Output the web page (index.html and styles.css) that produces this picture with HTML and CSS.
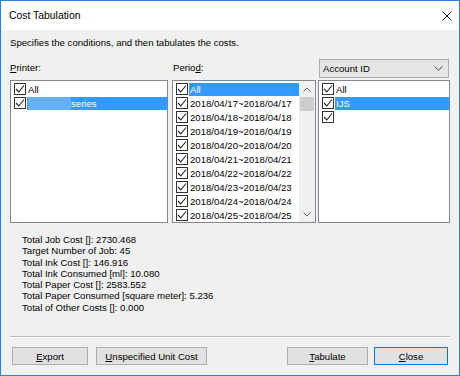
FILE: index.html
```html
<!DOCTYPE html>
<html lang="en">
<head>
    <meta charset="UTF-8">
    <title>Cost Tabulation</title>
    <link rel="stylesheet" href="styles.css">
</head>
<body>
    <svg class="defs" width="0" height="0">
        <symbol id="chk" viewBox="0 0 12 12">
            <rect x="0.5" y="0.5" width="11" height="11" fill="#fff" stroke="#333"/>
            <polyline points="2,6 4.8,9 10,2.5" fill="none" stroke="#222" stroke-width="1.1"/>
        </symbol>
    </svg>

    <div class="window">
        <div class="titlebar">
            <span class="title">Cost Tabulation</span>
            <svg class="close-x" viewBox="0 0 10 10">
                <path d="M0.5,0.5 L9.5,9.5 M9.5,0.5 L0.5,9.5" stroke="#111" stroke-width="1"/>
            </svg>
        </div>

        <div class="content">
            <p class="desc">Specifies the conditions, and then tabulates the costs.</p>

            <div class="lists">
                <!-- Printer -->
                <div class="col col-printer">
                    <div class="col-head"><span class="label"><u>P</u>rinter:</span></div>
                    <div class="listbox">
                        <div class="row"><svg class="chk"><use href="#chk"/></svg><span class="item">All</span></div>
                        <div class="row"><svg class="chk"><use href="#chk"/></svg><span class="item sel"><span class="masked"></span>series</span></div>
                    </div>
                </div>

                <!-- Period -->
                <div class="col col-period">
                    <div class="col-head"><span class="label">Perio<u>d</u>:</span></div>
                    <div class="listbox period-box">
                        <div class="rows">
                            <div class="row"><svg class="chk"><use href="#chk"/></svg><span class="item sel">All</span></div>
                            <div class="row"><svg class="chk"><use href="#chk"/></svg><span class="item">2018/04/17~2018/04/17</span></div>
                            <div class="row"><svg class="chk"><use href="#chk"/></svg><span class="item">2018/04/18~2018/04/18</span></div>
                            <div class="row"><svg class="chk"><use href="#chk"/></svg><span class="item">2018/04/19~2018/04/19</span></div>
                            <div class="row"><svg class="chk"><use href="#chk"/></svg><span class="item">2018/04/20~2018/04/20</span></div>
                            <div class="row"><svg class="chk"><use href="#chk"/></svg><span class="item">2018/04/21~2018/04/21</span></div>
                            <div class="row"><svg class="chk"><use href="#chk"/></svg><span class="item">2018/04/22~2018/04/22</span></div>
                            <div class="row"><svg class="chk"><use href="#chk"/></svg><span class="item">2018/04/23~2018/04/23</span></div>
                            <div class="row"><svg class="chk"><use href="#chk"/></svg><span class="item">2018/04/24~2018/04/24</span></div>
                            <div class="row"><svg class="chk"><use href="#chk"/></svg><span class="item">2018/04/25~2018/04/25</span></div>
                        </div>
                        <div class="vscroll">
                            <div class="sb-btn">
                                <svg width="8" height="5" viewBox="0 0 8 5"><polyline points="0.5,4.5 4,1 7.5,4.5" fill="none" stroke="#606060"/></svg>
                            </div>
                            <div class="sb-thumb"></div>
                            <div class="sb-track"></div>
                            <div class="sb-btn">
                                <svg width="8" height="5" viewBox="0 0 8 5"><polyline points="0.5,0.5 4,4 7.5,0.5" fill="none" stroke="#606060"/></svg>
                            </div>
                        </div>
                    </div>
                </div>

                <!-- Account -->
                <div class="col col-account">
                    <div class="col-head">
                        <div class="combo">
                            <span>Account ID</span>
                            <svg width="9" height="5" viewBox="0 0 9 5"><polyline points="0.5,0.5 4.5,4.2 8.5,0.5" fill="none" stroke="#444"/></svg>
                        </div>
                    </div>
                    <div class="listbox">
                        <div class="row"><svg class="chk"><use href="#chk"/></svg><span class="item">All</span></div>
                        <div class="row"><svg class="chk"><use href="#chk"/></svg><span class="item sel">IJS</span></div>
                        <div class="row"><svg class="chk"><use href="#chk"/></svg><span class="item"></span></div>
                    </div>
                </div>
            </div>

            <div class="totals">
                <div>Total Job Cost []: 2730.468</div>
                <div>Target Number of Job: 45</div>
                <div>Total Ink Cost []: 146.916</div>
                <div>Total Ink Consumed [ml]: 10.080</div>
                <div>Total Paper Cost []: 2583.552</div>
                <div>Total Paper Consumed [square meter]: 5.236</div>
                <div>Total of Other Costs []: 0.000</div>
            </div>

            <div class="sep"></div>

            <div class="buttons">
                <button class="btn btn-export"><u>E</u>xport</button>
                <button class="btn btn-unit"><u>U</u>nspecified Unit Cost</button>
                <span class="spacer"></span>
                <button class="btn btn-tab"><u>T</u>abulate</button>
                <button class="btn btn-close default"><u>C</u>lose</button>
            </div>
        </div>
    </div>
</body>
</html>
```

FILE: styles.css
```css
body {
    margin: 0;
    font-family: "Liberation Sans", Arial, sans-serif;
    font-size: 9.6px;
    color: #000;
    background: #fff;
}

.defs {
    position: absolute;
}

.window {
    width: 460px;
    height: 376px;
    box-sizing: border-box;
    border: 1px solid #2a7fd6;
    display: flex;
    flex-direction: column;
    background: #f0f0f0;
}

/* Title bar */
.titlebar {
    height: 29px;
    background: #fff;
    display: flex;
    align-items: center;
    justify-content: space-between;
    padding: 0 7px 0 8px;
}

.title {
    font-size: 10.4px;
}

.close-x {
    width: 10px;
    height: 10px;
}

.content {
    flex: 1;
    padding: 0 9px;
    display: flex;
    flex-direction: column;
}

.desc {
    margin: 6px 0 0;
    line-height: 14px;
}

/* Lists */
.lists {
    display: flex;
}

.col-printer { width: 158px; }
.col-period  { width: 144px; margin-left: 4px; }
.col-account { width: 132px; margin-left: 2px; }

.col-head {
    height: 30px;
    display: flex;
    align-items: flex-end;
}

.label {
    line-height: 14px;
    margin-bottom: 5px;
}

.col-period .label {
    padding-left: 1px;
}

.combo {
    flex: 1;
    height: 19px;
    margin: 0 1px 2px;
    box-sizing: border-box;
    border: 1px solid #acacac;
    background: #e5e5e5;
    display: flex;
    align-items: center;
    justify-content: space-between;
    padding: 0 5px 0 3px;
}

.listbox {
    height: 143px;
    box-sizing: border-box;
    border: 1px solid #828790;
    background: #fff;
    padding-top: 1px;
}

.row {
    height: 14px;
    display: flex;
    align-items: center;
    padding-left: 3px;
}

.chk {
    width: 12px;
    height: 12px;
    flex: none;
}

.item {
    flex: 1;
    height: 13px;
    line-height: 13px;
    margin-left: 1px;
    padding-left: 1px;
    white-space: nowrap;
}

.item.sel {
    background: #3399ff;
    color: #fff;
}

.masked {
    display: inline-block;
    width: 43px;
    height: 13px;
    vertical-align: top;
    background: #66b1f6;
}

/* Period list with scrollbar */
.period-box {
    display: flex;
    padding-top: 0;
}

.period-box .rows {
    flex: 1;
    padding-top: 1px;
}

.vscroll {
    width: 16px;
    background: #f0f0f0;
    display: flex;
    flex-direction: column;
}

.sb-btn {
    height: 16px;
    display: flex;
    align-items: center;
    justify-content: center;
}

.sb-thumb {
    height: 14px;
    margin: 0 1px;
    background: #cdcdcd;
}

.sb-track {
    flex: 1;
}

/* Totals */
.totals {
    margin-top: 11px;
    padding-left: 12px;
    line-height: 11.3px;
}

.sep {
    margin-top: auto;
    border-top: 1px solid #b9b9b9;
    border-bottom: 1px solid #fff;
}

/* Buttons */
.buttons {
    display: flex;
    padding: 0 2px 10px;
    margin-top: 9px;
}

.btn {
    height: 18px;
    box-sizing: border-box;
    border: 1px solid #adadad;
    background: #e1e1e1;
    font: inherit;
    color: #000;
    padding: 0;
    text-align: center;
}

.btn-export { width: 76px; }
.btn-unit   { width: 111px; margin-left: 8px; }
.btn-tab    { width: 81px; }
.btn-close  { width: 74px; margin-left: 6px; }

.btn.default {
    border-color: #0078d7;
}

.spacer {
    flex: 1;
}
```
